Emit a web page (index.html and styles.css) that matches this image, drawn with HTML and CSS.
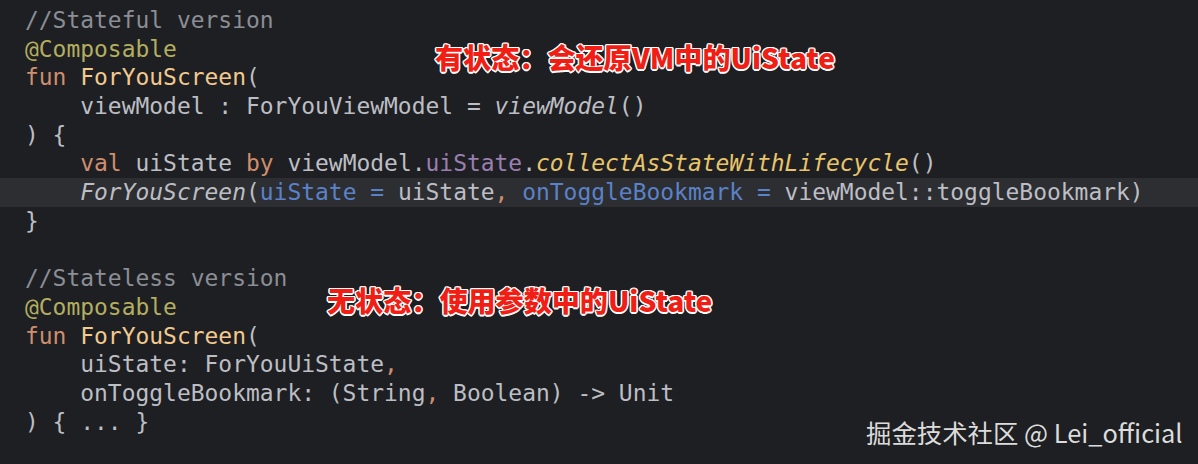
FILE: index.html
```html
<!DOCTYPE html>
<html lang="zh">
<head>
<meta charset="utf-8">
<title>Stateful vs Stateless</title>
<link rel="stylesheet" href="styles.css">
</head>
<body>
<div class="editor">
  <div class="code">
    <div class="line"><span class="cm">//Stateful version</span></div>
    <div class="line"><span class="an">@Composable</span></div>
    <div class="line"><span class="kw">fun</span> <span class="fn">ForYouScreen</span>(</div>
    <div class="line">    viewModel : ForYouViewModel = <span class="it">viewModel</span>()</div>
    <div class="line">) {</div>
    <div class="line">    <span class="kw">val</span> uiState <span class="kw">by</span> viewModel.<span class="pr">uiState</span>.<span class="ext">collectAsStateWithLifecycle</span>()</div>
    <div class="line hl">    <span class="it">ForYouScreen</span>(<span class="na">uiState = </span>uiState<span class="kw">,</span> <span class="na">onToggleBookmark = </span>viewModel::toggleBookmark)</div>
    <div class="line">}</div>
    <div class="line"> </div>
    <div class="line"><span class="cm">//Stateless version</span></div>
    <div class="line"><span class="an">@Composable</span></div>
    <div class="line"><span class="kw">fun</span> <span class="fn">ForYouScreen</span>(</div>
    <div class="line">    uiState: ForYouUiState<span class="kw">,</span></div>
    <div class="line">    onToggleBookmark: (String<span class="kw">,</span> Boolean) -&gt; Unit</div>
    <div class="line">) { ... }</div>
  </div>
  <div class="note note-top">有状态：会还原VM中的UiState</div>
  <div class="note note-bottom">无状态：使用参数中的UiState</div>
  <div class="watermark">掘金技术社区 @ Lei_official</div>
</div>
</body>
</html>
```

FILE: styles.css
```css
html, body {
  margin: 0;
  padding: 0;
  background: #1e1f22;
}

.editor {
  position: relative;
  width: 1198px;
  height: 464px;
  overflow: hidden;
  background: #1e1f22;
}

.code {
  display: flex;
  flex-direction: column;
  padding-top: 6px;
  font-family: "DejaVu Sans Mono", "Liberation Mono", monospace;
  font-size: 22.95px;
  color: #bcbec4;
}

.line {
  height: 28.7px;
  line-height: 28.7px;
  padding-left: 25px;
  white-space: pre;
}

.hl {
  background: #2d2e31;
}

.cm { color: #8b8e94; }
.an { color: #b3ae60; }
.kw { color: #cf8e6d; }
.fn { color: #f2c98f; }
.it { font-style: italic; color: #bcbec4; }
.pr { color: #9a7fb0; }
.ext { font-style: italic; color: #e8c46a; }
.na { color: #5b82c8; }

.note {
  position: absolute;
  font-family: "Noto Sans CJK SC", sans-serif;
  font-weight: 900;
  font-size: 28.1px;
  line-height: 1;
  color: #f01e14;
  white-space: nowrap;
  text-shadow:
    1.5px 0 0 #fff, -1.5px 0 0 #fff, 0 1.5px 0 #fff, 0 -1.5px 0 #fff,
    1px 1px 0 #fff, -1px -1px 0 #fff, 1px -1px 0 #fff, -1px 1px 0 #fff;
}

.note-top {
  left: 435px;
  top: 43px;
}

.note-bottom {
  left: 327px;
  top: 286px;
}

.watermark {
  position: absolute;
  left: 866px;
  top: 417px;
  font-family: "Noto Sans CJK SC", "Noto Sans", sans-serif;
  font-size: 25.4px;
  line-height: 1.2;
  color: #dcdcdc;
  white-space: nowrap;
}
```
